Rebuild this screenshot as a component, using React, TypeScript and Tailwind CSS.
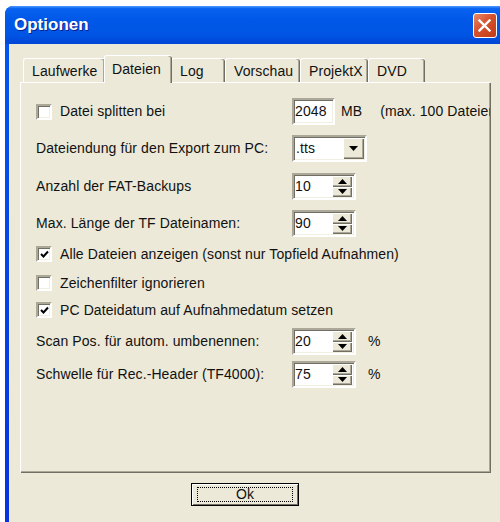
import React from "react";

const face = "bg-[#ECE9D8]";
const sunken =
  "border-2 border-t-[#ACA899] border-l-[#ACA899] border-r-white border-b-white shadow-[inset_1px_1px_0_#716F64,inset_-1px_-1px_0_#F1EFE2] bg-white";
const raised =
  "bg-[#ECE9D8] shadow-[inset_1px_1px_0_#fff,inset_-1px_-1px_0_#716F64,inset_-2px_-2px_0_#ACA899]";

const Check = ({ checked }: { checked?: boolean }) => (
  <div className={`flex h-[16px] w-[16px] shrink-0 items-center justify-center ${sunken}`}>
    {checked && (
      <svg width="9" height="9" viewBox="0 0 9 9">
        <path d="M1 4 L3.5 6.5 L8 1.5" stroke="#000" strokeWidth="2" fill="none" />
      </svg>
    )}
  </div>
);

const Spinner = ({ value }: { value: string }) => (
  <div className={`flex h-[27px] w-[64px] items-stretch ${sunken}`}>
    <div className="flex flex-1 items-center pl-[1px]">{value}</div>
    <div className="my-[1px] mr-[2px] flex w-[20px] flex-col">
      <div className={`flex flex-1 items-center justify-center ${raised}`}>
        <svg width="9" height="5" viewBox="0 0 9 5">
          <path d="M0 5 L4.5 0 L9 5 Z" fill="#000" />
        </svg>
      </div>
      <div className={`flex flex-1 items-center justify-center ${raised}`}>
        <svg width="9" height="5" viewBox="0 0 9 5">
          <path d="M0 0 L4.5 5 L9 0 Z" fill="#000" />
        </svg>
      </div>
    </div>
  </div>
);

const Tab = ({
  name,
  width,
  active,
}: {
  name: string;
  width: number;
  active?: boolean;
}) => (
  <div
    style={{ width }}
    className={`flex shrink-0 rounded-t-[3px] border-l border-t border-white ${face} shadow-[inset_-1px_0_0_#716F64,inset_-2px_0_0_#ACA899] ${
      active ? "relative z-10 -mx-[1px] -mb-[1px] h-[28px] pt-[3px] pl-[7px]" : "h-[24px] pt-[2px] pl-[8px]"
    }`}
  >
    {name}
  </div>
);

export default function App() {
  return (
    <div
      className="h-[522px] w-[500px] overflow-hidden bg-white pl-[5px] pt-[6px] text-[14px] tracking-[0.1px] text-[#111]"
      style={{ fontFamily: '"Liberation Sans", Arial, sans-serif' }}
    >
      <div className="h-[540px] w-[520px] overflow-hidden rounded-t-[8px] bg-[linear-gradient(to_bottom,#0058EE,#0831D9)]">
        {/* title bar */}
        <div className="flex h-[38px] items-center bg-[linear-gradient(to_bottom,#4C9BFF_0%,#0A62F0_7%,#0058E8_35%,#0055E4_75%,#0046D6_100%)] pl-[9px]">
          <span className="text-[17px] font-bold tracking-normal text-white [text-shadow:1px_1px_0_#0A1E8C]">
            Optionen
          </span>
          <div className="ml-[384px] flex h-[25px] w-[24px] items-center justify-center rounded-[3px] border border-white bg-[linear-gradient(135deg,#E88A6C,#D5512C_45%,#C23A17)]">
            <svg width="13" height="13" viewBox="0 0 13 13">
              <path d="M1.5 1.5 L11.5 11.5 M11.5 1.5 L1.5 11.5" stroke="#fff" strokeWidth="2.4" strokeLinecap="square" />
            </svg>
          </div>
        </div>

        <div className={`ml-[4px] h-[500px] ${face} pt-[11px]`}>
          {/* tab headers */}
          <div className="flex items-end pl-[14px]">
            <Tab name="Laufwerke" width={82} />
            <Tab name="Dateien" width={68} active />
            <Tab name="Log" width={54} />
            <Tab name="Vorschau" width={75} />
            <Tab name="ProjektX" width={68} />
            <Tab name="DVD" width={57} />
          </div>

          {/* tab page */}
          <div className="ml-[11px] h-[390px] w-[470px] overflow-hidden border-l border-t border-white shadow-[inset_-1px_-1px_0_#ACA899,1px_1px_0_#716F64] pl-[15px]">
            <div className="mt-[15px] flex h-[27px] items-center">
              <Check />
              <span className="ml-[8px] w-[232px] shrink-0">Datei splitten bei</span>
              <div className={`flex h-[27px] w-[43px] shrink-0 items-center pl-[1px] ${sunken}`}>2048</div>
              <span className="ml-[6px] shrink-0">MB</span>
              <span className="ml-[18px] shrink-0 whitespace-nowrap">(max. 100 Dateien)</span>
            </div>

            <div className="mt-[10px] flex h-[27px] items-center">
              <span className="w-[256px] shrink-0">Dateiendung für den Export zum PC:</span>
              <div className={`flex h-[27px] w-[75px] items-stretch ${sunken}`}>
                <div className="flex flex-1 items-center pl-[2px]">.tts</div>
                <div className={`my-[1px] mr-[1px] flex w-[21px] items-center justify-center ${raised}`}>
                  <svg width="9" height="5" viewBox="0 0 9 5">
                    <path d="M0 0 L4.5 5 L9 0 Z" fill="#000" />
                  </svg>
                </div>
              </div>
            </div>

            <div className="mt-[11px] flex h-[27px] items-center">
              <span className="w-[256px] shrink-0">Anzahl der FAT-Backups</span>
              <Spinner value="10" />
            </div>

            <div className="mt-[10px] flex h-[27px] items-center">
              <span className="w-[256px] shrink-0">Max. Länge der TF Dateinamen:</span>
              <Spinner value="90" />
            </div>

            <div className="mt-[8px] flex h-[18px] items-center">
              <Check checked />
              <span className="ml-[8px]">Alle Dateien anzeigen (sonst nur Topfield Aufnahmen)</span>
            </div>

            <div className="mt-[11px] flex h-[18px] items-center">
              <Check />
              <span className="ml-[8px]">Zeichenfilter ignorieren</span>
            </div>

            <div className="mt-[9px] flex h-[18px] items-center">
              <Check checked />
              <span className="ml-[8px]">PC Dateidatum auf Aufnahmedatum setzen</span>
            </div>

            <div className="mt-[9px] flex h-[27px] items-center">
              <span className="w-[256px] shrink-0">Scan Pos. für autom. umbenennen:</span>
              <Spinner value="20" />
              <span className="ml-[12px]">%</span>
            </div>

            <div className="mt-[6px] flex h-[27px] items-center">
              <span className="w-[256px] shrink-0">Schwelle für Rec.-Header (TF4000):</span>
              <Spinner value="75" />
              <span className="ml-[12px]">%</span>
            </div>
          </div>

          {/* dialog button */}
          <div className="ml-[182px] mt-[11px] flex h-[23px] w-[108px] items-center justify-center border border-black bg-[#ECE9D8] shadow-[inset_1px_1px_0_#fff,inset_-1px_-1px_0_#716F64]">
            <div className="flex h-[15px] w-[96px] items-center justify-center border border-dotted border-black">
              Ok
            </div>
          </div>
        </div>
      </div>
    </div>
  );
}
